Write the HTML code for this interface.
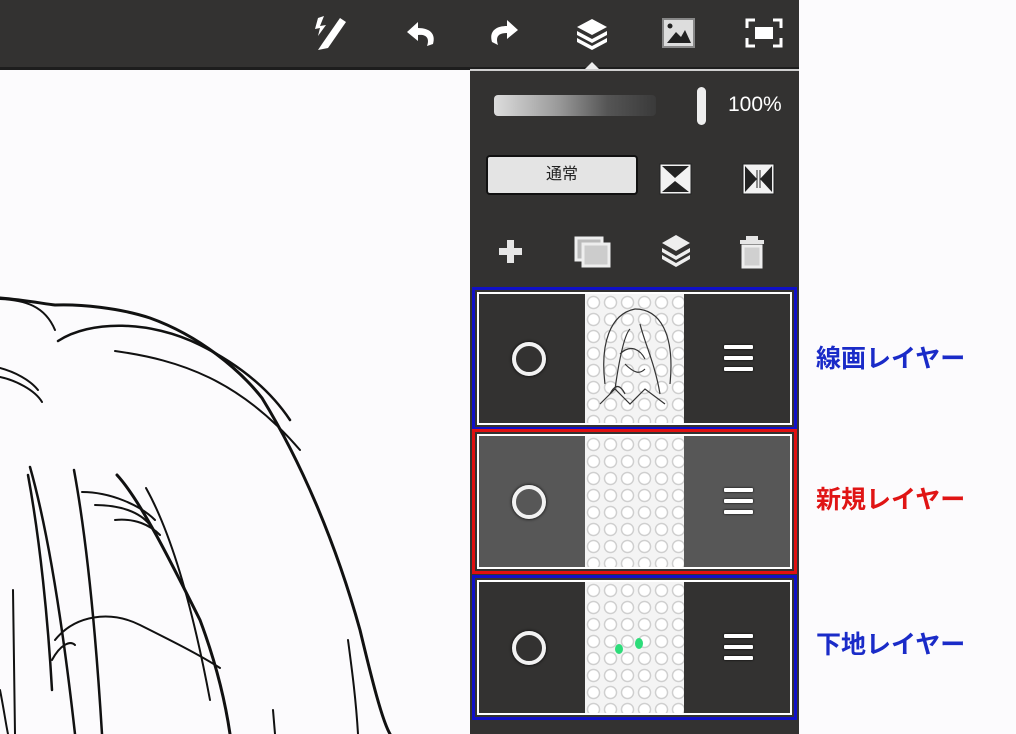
<!DOCTYPE html>
<html><head><meta charset="utf-8"><style>
*{margin:0;padding:0;box-sizing:border-box}
body{width:1016px;height:734px;background:#fcfbfd;position:relative;overflow:hidden;font-family:"Liberation Sans","Noto Sans CJK JP",sans-serif}
.bar{position:absolute;left:0;top:0;width:799px;height:68px;background:#333231}
.line{position:absolute;left:0;top:67px;width:799px;height:3px;background:#1d1d1d}
.line2{position:absolute;left:470px;top:69px;width:329px;height:2px;background:#cfcfcf}
.panel{position:absolute;left:470px;top:71px;width:329px;height:663px;background:#333231}
.ab{position:absolute}
.lbl{position:absolute;left:816px;font-size:25px;font-weight:bold}
.row{position:absolute;left:472px;width:325px;border:3px solid}
.inner{position:absolute;left:2px;top:2px;right:2px;bottom:2px;border:2px solid #fff;display:flex}
.side{width:106px;height:100%;position:relative}
.thumb{width:100px;height:100%;background-color:#f4f4f4;background-image:radial-gradient(circle,#fff 0 5px,#cfcfcf 5.5px 6.5px,transparent 7px);background-size:17px 17px;position:relative}
.circ{position:absolute;left:33px;top:50%;margin-top:-17px;width:34px;height:34px;border-radius:50%;border:4px solid #f2f2f2;box-shadow:0 0 3px #000}
.ham{position:absolute;left:40px;top:50%;margin-top:-14px;width:29px}
.ham i{display:block;height:4px;background:#fff;margin-bottom:7px;border-radius:1px;box-shadow:0 0 2px #000}
</style></head><body>
<svg class="ab" style="left:0;top:280px" width="470" height="454" viewBox="0 280 470 454" fill="none" stroke="#111" stroke-linecap="round">
<path d="M0 298 C25 300 45 304 55 305 C80 304 120 308 150 318 C200 336 240 370 262 398 C300 460 335 540 360 630 C372 680 382 720 390 734" stroke-width="3"/>
<path d="M0 299 C25 300 45 306 55 330" stroke-width="2"/>
<path d="M58 341 C90 320 150 320 200 345 C240 365 270 390 290 420" stroke-width="2.5"/>
<path d="M115 351 C180 360 240 380 300 450" stroke-width="2"/>
<path d="M0 368 C15 372 30 380 38 390 M0 377 C15 380 35 390 42 402" stroke-width="2"/>
<path d="M30 467 C45 520 60 600 75 734 M28 475 C40 540 48 620 52 690" stroke-width="2.5"/>
<path d="M74 470 C85 530 95 620 102 734" stroke-width="2.5"/>
<path d="M117 475 C140 500 170 560 200 620 C215 660 225 700 230 734" stroke-width="3"/>
<path d="M146 488 C175 540 195 620 210 700" stroke-width="2"/>
<path d="M82 492 C110 492 140 505 155 520 M95 505 C120 505 140 512 150 525 M115 520 C135 518 150 525 160 535" stroke-width="2"/>
<path d="M55 640 C75 615 110 610 140 625 C170 640 200 655 220 668" stroke-width="2"/>
<path d="M52 660 C60 645 70 640 75 645" stroke-width="2"/>
<path d="M13 590 C14 640 14 690 15 734 M0 690 C4 710 6 725 8 734" stroke-width="2"/>
<path d="M348 640 C352 670 356 700 358 734 M273 710 L275 734" stroke-width="2"/>
</svg>
<div class="bar"></div><div class="line"></div><div class="line2"></div>
<div class="panel"></div>
<svg class="ab" style="left:0;top:0" width="800" height="80" viewBox="0 0 800 80">
<g fill="#fff">
<path d="M322 44 L340 18 L346 22 L328 48 L318 50Z"/>
<path d="M318 18 L324 16 L320 26 L326 25 L318 36 L320 28 L315 29Z"/>
<path d="M407 32 L418 22 L418 28 C430 28 436 34 433 44 L427 46 C430 38 426 34 418 35 L418 41Z"/>
<path d="M518 30 L507 20 L507 26 C495 26 489 32 492 42 L498 45 C495 36 499 33 507 33 L507 39Z"/>
<path d="M592 19 L607 27 L592 35 L577 27Z"/>
<path d="M577 31 L592 39 L607 31 L607 35 L592 43 L577 35Z" />
<path d="M577 38 L592 46 L607 38 L607 42 L592 50 L577 42Z"/>
<path d="M585 69 L592 62 L599 69Z" fill="#eee"/>
<rect x="663" y="19" width="31" height="28" fill="#ddd" stroke="#888" stroke-width="2"/>
<path d="M667 43 L676 32 L681 37 L685 30 L691 43Z" fill="#222"/>
<circle cx="670" cy="26" r="2.5" fill="#222"/>
<rect x="755" y="27" width="18" height="12"/>
</g>
<g stroke="#fff" stroke-width="3" fill="none"><path d="M747 28 V20 H755 M773 20 H781 V28 M781 38 V46 H773 M755 46 H747 V38"/></g>
</svg>
<div class="ab" style="left:494px;top:95px;width:162px;height:21px;border-radius:4px;background:linear-gradient(90deg,#ddd,#999 40%,#555 70%,#3a3a3a);"></div>
<div class="ab" style="left:697px;top:87px;width:9px;height:38px;border-radius:5px;background:#eee"></div>
<div class="ab" style="left:728px;top:93px;color:#fff;font-size:21px">100%</div>
<div class="ab" style="left:486px;top:155px;width:152px;height:40px;border-radius:4px;background:#e4e4e4;border:2px solid #111;text-align:center;line-height:36px;font-size:16px;color:#222">通常</div>
<svg class="ab" style="left:655px;top:160px" width="130" height="40">
<rect x="5" y="4" width="31" height="30" fill="#f2f2f2" stroke="#222"/>
<path d="M7 6 H34 L20 18Z M7 32 H34 L20 21Z" fill="#222"/>
<rect x="88" y="4" width="31" height="30" fill="#f2f2f2" stroke="#222"/>
<path d="M90 6 V32 L102 19Z M117 6 V32 L105 19Z" fill="#222"/>
<path d="M102 10 V28 M105 10 V28" stroke="#222"/>
</svg>
<svg class="ab" style="left:490px;top:230px" width="290" height="45" fill="#e6e6e6">
<path d="M17 10 H24 V18 H32 V25 H24 V33 H17 V25 H9 V18 H17Z"/>
<rect x="86" y="8" width="26" height="22" fill="#bbb" stroke="#eee" stroke-width="3"/>
<rect x="93" y="14" width="26" height="22" fill="#ccc" stroke="#eee" stroke-width="3"/>
<path d="M186 5 L200 13 L186 21 L172 13Z M172 18 L186 26 L200 18 V22 L186 30 L172 22Z M172 25 L186 33 L200 25 V29 L186 37 L172 29Z" fill="#eee"/>
<rect x="256" y="6" width="12" height="4"/><rect x="250" y="10" width="24" height="4"/><rect x="253" y="16" width="18" height="21" fill="#d0d0d0" stroke="#eee" stroke-width="3"/>
</svg>
<div class="row" style="top:287px;height:143px;border-color:#1010c8"><div class="inner">
<div class="side" style="background:#333231"><div class="circ"></div></div>
<div class="thumb"><svg width="100" height="130" style="position:absolute;left:0;top:0" fill="none" stroke="#333" stroke-width="1.2"><path d="M20 90 C15 50 25 20 50 15 C75 15 90 40 85 90 M30 95 C35 60 40 40 45 35 M55 30 C60 50 70 70 75 100 M35 60 C45 50 55 55 60 65 M15 110 L30 95 L45 110 L60 95 L80 110 M40 70 C50 80 55 80 60 75 M25 100 C30 90 35 90 40 100"/></svg></div>
<div class="side" style="background:#333231"><div class="ham"><i></i><i></i><i></i></div></div>
</div></div>
<div class="row" style="top:429px;height:145px;border-color:#e01010"><div class="inner">
<div class="side" style="background:#575757"><div class="circ"></div></div>
<div class="thumb"></div>
<div class="side" style="background:#575757"><div class="ham"><i></i><i></i><i></i></div></div>
</div></div>
<div class="row" style="top:575px;height:145px;border-color:#1010c8"><div class="inner">
<div class="side" style="background:#333231"><div class="circ"></div></div>
<div class="thumb"><div style="position:absolute;left:30px;top:62px;width:8px;height:10px;border-radius:50%;background:#2ddc7a"></div><div style="position:absolute;left:50px;top:56px;width:8px;height:11px;border-radius:50%;background:#2ddc7a"></div></div>
<div class="side" style="background:#333231"><div class="ham"><i></i><i></i><i></i></div></div>
</div></div>
<div class="lbl" style="top:339px;color:#1a2bc8">線画レイヤー</div>
<div class="lbl" style="top:480px;color:#e01414">新規レイヤー</div>
<div class="lbl" style="top:625px;color:#1a2bc8">下地レイヤー</div>
</body></html>
